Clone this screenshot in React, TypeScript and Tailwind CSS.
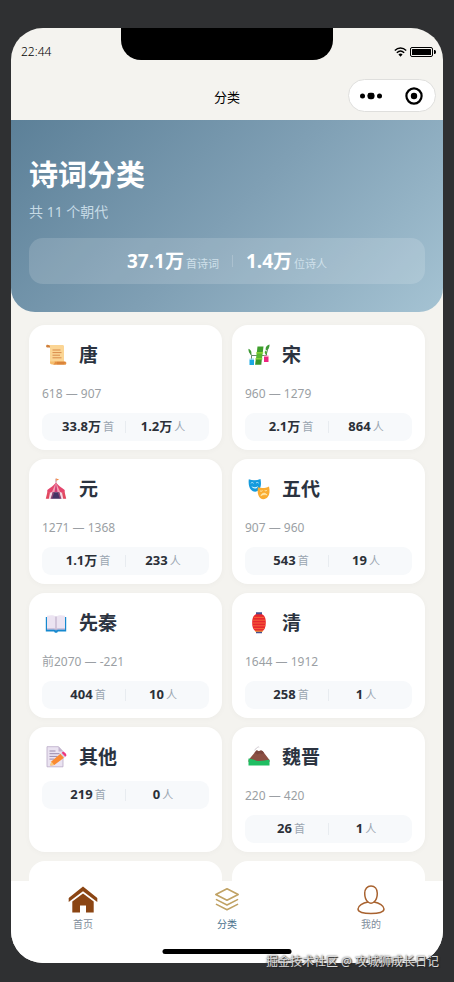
import type { ReactNode } from "react";

type Dynasty = {
  name: string;
  years?: string;
  poems: string;
  poets: string;
  icon: ReactNode;
};

const dynasties: Dynasty[] = [
  { name: "唐", years: "618 — 907", poems: "33.8万", poets: "1.2万", icon: <ScrollIcon /> },
  { name: "宋", years: "960 — 1279", poems: "2.1万", poets: "864", icon: <BambooIcon /> },
  { name: "元", years: "1271 — 1368", poems: "1.1万", poets: "233", icon: <TentIcon /> },
  { name: "五代", years: "907 — 960", poems: "543", poets: "19", icon: <MasksIcon /> },
  { name: "先秦", years: "前2070 — -221", poems: "404", poets: "10", icon: <BookIcon /> },
  { name: "清", years: "1644 — 1912", poems: "258", poets: "1", icon: <LanternIcon /> },
  { name: "其他", poems: "219", poets: "0", icon: <MemoIcon /> },
  { name: "魏晋", years: "220 — 420", poems: "26", poets: "1", icon: <MountainIcon /> },
];

export default function App() {
  return (
    <div className="h-screen bg-[#2f3032] px-[11px] pt-7 pb-[19px] font-['Noto_Sans','Noto_Sans_CJK_SC',sans-serif]">
      <div className="relative flex h-full flex-col overflow-hidden rounded-[32px] bg-[#f4f3ef]">
        <StatusBar />
        <NavBar />
        <main className="min-h-0 flex-1 overflow-hidden">
          <Hero />
          <div className="grid grid-cols-2 gap-x-[10px] gap-y-[9px] px-[18px] pt-[13px]">
            {dynasties.map((item) => (
              <DynastyCard key={item.name} item={item} />
            ))}
            <div className="h-[125px] rounded-2xl bg-white" />
            <div className="h-[125px] rounded-2xl bg-white" />
          </div>
        </main>
        <TabBar />
      </div>
      <p className="absolute right-[15px] bottom-3 text-xs leading-4 text-[#dcdcdc] [text-shadow:1px_1px_1px_#222,0_0_2px_#444]">
        掘金技术社区 @ 攻城狮成长日记
      </p>
    </div>
  );
}

function StatusBar() {
  return (
    <div className="flex h-12 shrink-0 items-center justify-between pr-[7px] pl-[10px]">
      <span className="text-xs font-light text-black">22:44</span>
      {/* Notch */}
      <div className="absolute top-0 left-1/2 h-8 w-[212px] -translate-x-1/2 rounded-b-[20px] bg-black" />
      <div className="flex items-center gap-[3px]">
        <svg width="13" height="10" viewBox="0 0 13 10" fill="none" stroke="#000" strokeWidth="1.4">
          <path d="M.8 3.6C4.2.2 8.8.2 12.2 3.6M2.8 5.8c2.2-2.1 5.2-2.1 7.4 0" />
          <path d="M4.4 7.4c1.2-1.1 3-1.1 4.2 0L6.5 9.8z" fill="#000" stroke="none" />
        </svg>
        <svg width="26" height="10" viewBox="0 0 26 10">
          <rect x=".5" y=".5" width="22" height="9" rx="1.5" fill="none" stroke="#000" />
          <rect x="2" y="2" width="19" height="6" rx=".5" />
          <path d="M24 3h.6c.8 0 1.4.9 1.4 2s-.6 2-1.4 2H24z" />
        </svg>
      </div>
    </div>
  );
}

function NavBar() {
  return (
    <header className="grid h-11 shrink-0 grid-cols-[1fr_auto_1fr] items-center px-[7px]">
      <span />
      <h1 className="text-[13px] font-normal text-black">分类</h1>
      <div className="mb-[5px] flex h-[33px] w-[88px] justify-self-end rounded-full border border-[#dfdfdd] bg-white">
        <button aria-label="更多" className="flex flex-1 items-center justify-center">
          <svg width="24" height="8" viewBox="0 0 24 8">
            <circle cx="3.5" cy="4" r="2.5" />
            <rect x="8.5" y=".8" width="7" height="6.4" rx="2.4" />
            <circle cx="20.5" cy="4" r="2.5" />
          </svg>
        </button>
        <button aria-label="关闭" className="flex flex-1 items-center justify-center">
          <svg width="18" height="18" viewBox="0 0 18 18">
            <circle cx="9" cy="9" r="7.6" fill="none" stroke="#000" strokeWidth="2.2" />
            <circle cx="9" cy="9" r="3.2" />
          </svg>
        </button>
      </div>
    </header>
  );
}

function Hero() {
  return (
    <section className="h-48 rounded-b-3xl bg-linear-135 from-[#5c8098] via-[#7f9fb4] to-[#a5c3d3] px-[18px] pt-9">
      <h2 className="text-[29px] leading-[38px] font-bold text-white">诗词分类</h2>
      <p className="mt-2 text-sm leading-5 text-[#c6dae5]">共 11 个朝代</p>
      <div className="mt-4 flex h-[46px] items-center justify-center rounded-[14px] bg-white/15">
        <Total value="37.1万" unit="首诗词" />
        <span className="mx-[13px] h-3 w-px bg-white/20" />
        <Total value="1.4万" unit="位诗人" />
      </div>
    </section>
  );
}

function Total({ value, unit }: { value: string; unit: string }) {
  return (
    <span className="flex items-baseline gap-[2px]">
      <strong className="text-[19px] font-bold text-white">{value}</strong>
      <span className="text-[11px] text-[#cfe0ea]">{unit}</span>
    </span>
  );
}

function DynastyCard({ item }: { item: Dynasty }) {
  return (
    <a
      href="#"
      className="block rounded-2xl bg-white px-[13px] pt-[13px] pb-[9px] shadow-[0_1px_6px_rgba(0,0,0,0.03)]"
    >
      <div className="flex h-[34px] items-center gap-[9px]">
        <span className="flex w-7 justify-center">{item.icon}</span>
        <h3 className="text-[19px] font-bold text-[#2b3340]">{item.name}</h3>
      </div>
      {item.years && (
        <p className="mt-[14px] mb-[11px] text-xs leading-4 text-[#9b9fa4]">{item.years}</p>
      )}
      <div className="mt-[7px] flex h-7 items-center rounded-[9px] bg-[#f7f9fb] px-[9px]">
        <Stat value={item.poems} unit="首" />
        <span className="h-3 w-px bg-[#e8ecf0]" />
        <Stat value={item.poets} unit="人" />
      </div>
    </a>
  );
}

function Stat({ value, unit }: { value: string; unit: string }) {
  return (
    <span className="flex flex-1 items-baseline justify-center gap-[2px]">
      <strong className="text-[13px] font-bold text-[#2b3038]">{value}</strong>
      <span className="text-[11px] text-[#9ba6b1]">{unit}</span>
    </span>
  );
}

function TabBar() {
  return (
    <nav className="relative grid h-[82px] shrink-0 grid-cols-3 bg-white pt-1">
      <Tab label="首页">
        <svg width="30" height="30" viewBox="0 0 30 30" fill="#8b4513">
          <path d="M15 1.6 29.3 13v4L15 6.2.7 17v-4z" />
          <path d="M15 8.6 25.7 16.600V27.500H18v-7h-6v7H4.300V16.600z" />
        </svg>
      </Tab>
      <Tab label="分类" active>
        <svg width="30" height="30" viewBox="0 0 30 30" fill="none" stroke="#c0a264" strokeWidth="1.6" strokeLinejoin="round" strokeLinecap="round">
          <path d="M15 3.800 26.200 9.500 15 15.200 3.800 9.500z" />
          <path d="M4.500 14.600 15 20l10.500-5.400M4.500 19.400 15 24.800l10.500-5.400" />
        </svg>
      </Tab>
      <Tab label="我的">
        <svg width="30" height="30" viewBox="0 0 30 30" fill="none" stroke="#a8622f" strokeWidth="1.500" strokeLinejoin="round">
          <path d="M12 17C9.600 15 8.700 11.700 8.700 8.300 8.700 3.900 11.300 1 15 1s6.300 2.900 6.300 7.300c0 3.400-.9 6.700-3.300 8.700 5.300 1 9.900 3.800 10 7.100.1 3-5.500 4.400-13 4.400S1.900 27.100 2 24.100c.1-3.300 4.700-6.100 10-7.100z" />
          <path d="M12 17c1.700 1.300 4.300 1.300 6 0" />
        </svg>
      </Tab>
      <div className="absolute bottom-[9px] left-1/2 h-[5px] w-[129px] -translate-x-1/2 rounded-full bg-black" />
    </nav>
  );
}

function Tab({ label, active, children }: { label: string; active?: boolean; children: ReactNode }) {
  return (
    <a href="#" className="flex flex-col items-center">
      {children}
      <span className={active ? "text-[10px] leading-[18px] text-[#48708c]" : "text-[10px] leading-[18px] text-[#7f8d9b]"}>
        {label}
      </span>
    </a>
  );
}

/* Dynasty icons, all on a 22x22 grid */

function ScrollIcon() {
  return (
    <svg width="22" height="22" viewBox="0 0 22 22">
      <path d="M3 1h14.500c1 0 1.500.6 1.500 1.500V18H5V4z" fill="#fbd594" />
      <path d="M2.500.7C.6.700.6 3.500 2.500 3.500H5V2.600C5 1.500 4 .7 2.500.7z" fill="#d0803c" />
      <path d="M5 17.500h4.500v3H7c-1.200 0-2-.6-2-1.700z" fill="#f6bd6c" />
      <path d="M9.500 17.500H20c1.800 0 1.800 3.300 0 3.300H8c1.200-.4 1.500-1.800 1.500-3.300z" fill="#e5913f" />
      <path d="M12 18.300h8M12 19.800h7" stroke="#c76f32" strokeWidth=".5" />
      <path d="M7.500 6h8M7.500 8.600h9M7.500 11.200h7.500M7.500 13.800h9" stroke="#d98b4b" strokeWidth="1" />
    </svg>
  );
}

function BambooIcon() {
  return (
    <svg width="22" height="22" viewBox="0 0 22 22">
      <path d="M3.500 16v-4.500H18.500V8M18 11.500 20 4M3.500 11.500 2 8" fill="none" stroke="#587b5d" strokeWidth=".9" />
      <path d="M9.500 2.500h6l-.8 6.300H8.800z" fill="#3f9f2c" />
      <path d="M8.700 8.800h6l-.7 6H8z" fill="#58b72f" />
      <path d="M7.900 14.800h6l-.6 6H7.100z" fill="#399629" />
      <path d="M8.300 8.300h6.900v1.200H8.100zM7.500 14.300h6.900v1.200H7.300z" fill="#8fd832" />
      <path d="M.5 4.800C3.400 6 4 8.500 3 11 1 9 .3 7.400.5 4.800zM21.500.6C18 1.800 17 4 18 6.600c2.400-1.300 3.700-3.300 3.500-6z" fill="#3f9a36" />
      <path d="M17.700 6.500c-1.500 1.500-1.200 3 .3 4 1.200-1.200 1.200-2.700-.3-4z" fill="#51ae35" />
      <path d="M1.500 15.500H6V21H1.500z" fill="#1ba8e3" />
      <path d="M1.500 14.500H6v1.200H1.500z" fill="#9adbf2" />
      <path d="M16 12.500h4.500V18H16z" fill="#ed247f" />
      <path d="M16 11.500h4.500v1.200H16z" fill="#ff91b8" />
    </svg>
  );
}

function TentIcon() {
  return (
    <svg width="22" height="22" viewBox="0 0 22 22">
      <path d="M11 5 3 11.500 1.500 20.800h19L19 11.500z" fill="#f2d9e3" />
      <path d="M11 4.500C8.500 8 5.500 9.500 2.300 12v2.200c1.700.8 3.500.8 4.700-.4 1.300 1.100 2.800 1.100 4 0 1.200 1.100 2.700 1.100 4 0 1.200 1.200 3 1.200 4.700.4V12C16.500 9.500 13.500 8 11 4.500z" fill="#e4456c" />
      <path d="M11 4.500 7 13.800c1.300 1.100 2.800 1.100 4 0 1.200 1.100 2.700 1.100 4 0z" fill="#f5a0b4" />
      <path d="M11 4.500 9.500 14h3z" fill="#cf3f78" />
      <path d="m2.400 14-1.600 6.800h3L5 14.500zM19.600 14l1.600 6.800h-3L17 14.500z" fill="#e2485f" />
      <path d="M7.800 14.300h6.400l1.300 6.500h-9z" fill="#453465" />
      <path d="m7.800 14-2.300 6.800h1.600L9.300 14zM14.200 14l2.300 6.800h-1.600L12.700 14z" fill="#8f4675" />
      <path d="M11 .6v4" stroke="#ae596b" strokeWidth=".8" />
      <path d="m11.300.5 2.800 1-2.800 1.200z" fill="#f4893d" />
    </svg>
  );
}

function MasksIcon() {
  return (
    <svg width="22" height="22" viewBox="0 0 22 22">
      <path d="M.8 1.200c3.700 1.400 8 1.300 11.700-.2.8 4.500.8 8.400-1.800 11.100-2.300 2.300-5.500 2-7.700-.4C.8 9.200.3 5.200.8 1.200z" fill="#159bdd" />
      <path d="M2.800 5.300c.9-1 2-1 2.800 0M8 5.200c.8-1 1.900-1 2.700 0" fill="none" stroke="#d9f5ff" strokeWidth=".8" />
      <path d="M3.400 8c2 1.600 4.700 1.600 6.600-.1-.6 3.300-5.200 3.600-6.600.1z" fill="#d9f5ff" />
      <path d="M10 9.300c3.600 1.200 7.600.8 11-.9.900 4.300.8 8-1.300 10.600-2 2.500-5.200 2.900-7.500.9C9.600 17.600 9.300 13.300 10 9.300z" fill="#faac31" />
      <path d="M12 12.800c.8.600 1.800.5 2.500-.2M16.700 12.400c.8.600 1.800.4 2.400-.3" fill="none" stroke="#fff0bd" strokeWidth=".9" />
      <path d="M12.800 17.700c.8-3 4.800-3.400 6.300-.7-2-.7-4.300-.4-6.300.7z" fill="#fff0bd" stroke="#fff0bd" strokeWidth=".5" />
    </svg>
  );
}

function BookIcon() {
  return (
    <svg width="22" height="22" viewBox="0 0 22 22">
      <path d="M.8 5h20.400v14.500h-8.400c0 1.700-3.600 1.700-3.600 0H.8z" fill="#1689cf" />
      <path d="M2 3.800c3.200-.9 6.600-.8 9 .7 2.400-1.500 5.800-1.600 9-.7v13.500H2z" fill="#ece4f2" />
      <path d="M2 16.300h7.500l1.500 1.200 1.500-1.200H20v1.200h-7.200L11 18.600l-1.800-1.100H2z" fill="#c5b8d6" />
      <path d="M11 4.500v13" stroke="#b7a6c3" strokeWidth="1" />
    </svg>
  );
}

function LanternIcon() {
  return (
    <svg width="22" height="22" viewBox="0 0 22 22">
      <path d="M8 .3h6v3H8zM8 18.500h6v2.700H8z" fill="#49508e" />
      <path d="M8 2.200h6c2.300 1 3.800 3.500 3.800 8.400S16.300 18.500 14 19.500H8c-2.300-1-3.800-3.500-3.800-8.900S5.700 3.200 8 2.200z" fill="#e8262f" />
      <path d="M5.700 5.400h10.600M4.500 8.200h13M4.300 11h13.400M4.500 13.800h13M5.700 16.600h10.600" stroke="#f9773a" strokeWidth=".8" />
      <path d="M7 19.200h8" stroke="#f7b341" strokeWidth=".9" />
    </svg>
  );
}

function MemoIcon() {
  return (
    <svg width="22" height="22" viewBox="0 0 22 22">
      <path d="M2 .7h11.500L18 5.500v15.300H2z" fill="#eae3f1" stroke="#b9a9c7" strokeWidth=".8" />
      <path d="M13.500.7 18 5.500h-4.500z" fill="#c2b3ce" />
      <path d="M4.500 5h6M4.500 7.700h10M4.500 10.400h8M4.500 13.100h5" stroke="#9a8bac" strokeWidth="1" />
      <path d="m15.400 7.700 3.600 4L9.300 19l-4 .5 1-4z" fill="#fa8a31" />
      <path d="m6.300 15.500 3 3.500-4 .5z" fill="#f8ca7d" />
      <path d="m15.400 7.700 1.300-1 3.600 4-1.300 1z" fill="#d6cedf" />
      <path d="m16.700 6.700 1-.7c1.200-.8 4.200 2.300 3.600 3.800l-1 .9z" fill="#ed347d" />
    </svg>
  );
}

function MountainIcon() {
  return (
    <svg width="22" height="22" viewBox="0 0 22 22">
      <path d="M.5 14 8 5c1.200-1.200 2.200.8 3.300 0 1-.8 2.500-.9 3.500.3L21.500 14v2H.5z" fill="#8c5043" />
      <path d="M6.500 6.800 8 5c1.200-1.200 2.200.8 3.300 0 1-.8 2.500-.9 3.500.3l1.200 1.600-2.300 1.300-1.800-1-2.100 1.300z" fill="#7c463d" />
      <path d="M6.800 4.500C7 2.200 8.600 3 9.200 1.600c.4-.8 1.300-.8 2-.4" fill="none" stroke="#c9c3cb" strokeWidth=".9" />
      <path d="M.5 12.600c3.600 0 6 2.200 10.500 2.300 4 .1 7-.9 10.500-1.100v5.700H.5z" fill="#1fbd62" />
    </svg>
  );
}
